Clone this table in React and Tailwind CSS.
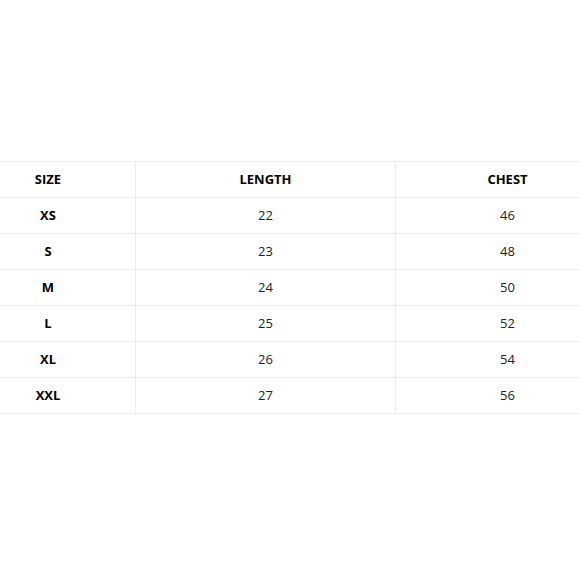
import React from "react";

const rows = [
    ["XS", "22", "46"],
    ["S", "23", "48"],
    ["M", "24", "50"],
    ["L", "25", "52"],
    ["XL", "26", "54"],
    ["XXL", "27", "56"],
];

const App = () => {
    return (
        <div className="w-[580px] h-[580px] bg-white overflow-hidden pt-[161px] font-['Open_Sans',sans-serif] text-[13px]">
            <table className="ml-[-40px] w-[659px] border-collapse table-fixed">
                <colgroup>
                    <col className="w-[175px]" />
                    <col className="w-[260px]" />
                    <col className="w-[224px]" />
                </colgroup>
                <thead>
                    <tr className="h-[36px]">
                        <th className="border border-[#ececec] font-bold text-black">SIZE</th>
                        <th className="border border-[#ececec] font-bold text-black">LENGTH</th>
                        <th className="border border-[#ececec] font-bold text-black">CHEST</th>
                    </tr>
                </thead>
                <tbody>
                    {rows.map((r) => (
                        <tr key={r[0]} className="h-[36px] text-center">
                            <td className="border border-[#ececec] font-bold text-black">{r[0]}</td>
                            <td className="border border-[#ececec] text-[#222]">{r[1]}</td>
                            <td className="border border-[#ececec] text-[#222]">{r[2]}</td>
                        </tr>
                    ))}
                </tbody>
            </table>
        </div>
    );
};

export default App;
